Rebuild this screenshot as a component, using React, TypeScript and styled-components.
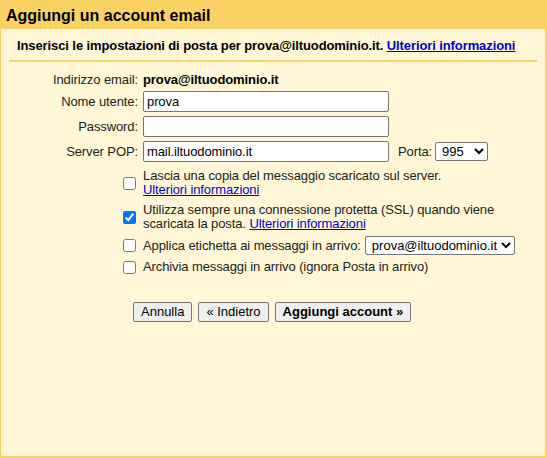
import React from "react";
import styled, { createGlobalStyle } from "styled-components";

const GlobalStyle = createGlobalStyle`
  html, body { margin: 0; padding: 0; }
  body {
    font-family: "Liberation Sans", Arial, sans-serif;
    font-size: 13px;
    letter-spacing: -0.1px;
    color: #222;
    background: #fff;
  }
  * { box-sizing: border-box; }
`;

const GOLD = "#fad163";
const CREAM = "#fff7d7";

const Window = styled.div`
  width: 547px;
  height: 458px;
  display: flex;
  flex-direction: column;
  background: ${CREAM};
  border-left: 1px solid ${GOLD};
  border-right: 2px solid ${GOLD};
  border-bottom: 2px solid ${GOLD};
`;

const Header = styled.div`
  height: 29px;
  margin-left: -1px;
  margin-right: -2px;
  padding: 6px 0 0 6px;
  background: ${GOLD};
  font-size: 16px;
  font-weight: bold;
  line-height: 20px;
  letter-spacing: 0;
  color: #000;
`;

const Intro = styled.div`
  margin: 0 8px;
  padding: 9px 8px 7px;
  border-bottom: 2px solid ${GOLD};
  font-weight: bold;
  line-height: 15px;
  color: #000;
`;

const Link = styled.a`
  color: #0000cc;
  text-decoration: underline;
  cursor: pointer;
`;

const Form = styled.div`
  display: flex;
  flex-direction: column;
  gap: 4px;
  margin-top: 10px;
`;

const Row = styled.div<{ $pad?: number; $top?: number }>`
  display: grid;
  grid-template-columns: 137px 1fr;
  column-gap: 5px;
  align-items: center;
  padding: ${(p) => p.$pad ?? 0}px 0;
  margin-top: ${(p) => p.$top ?? 0}px;
`;

const Label = styled.label`
  text-align: right;
  line-height: 15px;
  white-space: nowrap;
`;

const Value = styled.span`
  font-weight: bold;
  line-height: 15px;
  color: #000;
`;

const TextInput = styled.input`
  width: 246px;
  height: 21px;
  padding: 0 3px;
  border: 1px solid #767676;
  border-radius: 2px;
  background: #fff;
  font-family: "Liberation Sans", Arial, sans-serif;
  font-size: 13px;
  letter-spacing: -0.1px;
  color: #000;
  outline: none;
`;

const Inline = styled.div`
  display: flex;
  align-items: center;
  gap: 3px;
  white-space: nowrap;
  line-height: 14px;
`;

const PortLabel = styled.span`
  margin-left: 6px;
`;

const Select = styled.select<{ $width?: number; $offset?: number }>`
  height: 19px;
  ${(p) => (p.$width ? `width: ${p.$width}px;` : "")}
  margin-left: ${(p) => p.$offset ?? 0}px;
  padding: 0 0 0 2px;
  border: 1px solid #767676;
  border-radius: 2px;
  background: #fff;
  font-family: "Liberation Sans", Arial, sans-serif;
  font-size: 13px;
  letter-spacing: 0;
  color: #000;
`;

const Check = styled.input`
  justify-self: end;
  width: 13px;
  height: 13px;
  margin: 0 2px 0 0;
`;

const CheckText = styled.div`
  line-height: 14px;
  color: #222;
`;

const Buttons = styled.div`
  display: flex;
  gap: 6px;
  margin-top: 27px;
  padding-left: 132px;
`;

const Button = styled.button<{ $primary?: boolean }>`
  height: 20px;
  padding: 0 7px;
  border: 1px solid #767676;
  border-radius: 2px;
  background: #efefef;
  font-family: "Liberation Sans", Arial, sans-serif;
  font-size: 13px;
  letter-spacing: 0;
  font-weight: ${(p) => (p.$primary ? "bold" : "normal")};
  color: #000;
  line-height: 18px;
`;

export default function App() {
  return (
    <>
      <GlobalStyle />
      <Window>
        <Header>Aggiungi un account email</Header>
        <Intro>
          Inserisci le impostazioni di posta per prova@iltuodominio.it.{" "}
          <Link>Ulteriori informazioni</Link>
        </Intro>
        <Form>
          <Row>
            <Label>Indirizzo email:</Label>
            <Value>prova@iltuodominio.it</Value>
          </Row>
          <Row>
            <Label>Nome utente:</Label>
            <TextInput defaultValue="prova" />
          </Row>
          <Row>
            <Label>Password:</Label>
            <TextInput type="password" />
          </Row>
          <Row>
            <Label>Server POP:</Label>
            <Inline>
              <TextInput defaultValue="mail.iltuodominio.it" />
              <PortLabel>Porta:</PortLabel>
              <Select $width={53} defaultValue="995">
                <option value="110">110</option>
                <option value="995">995</option>
              </Select>
            </Inline>
          </Row>
          <Row $pad={1} $top={2}>
            <Check type="checkbox" />
            <CheckText>
              Lascia una copia del messaggio scaricato sul server.
              <br />
              <Link>Ulteriori informazioni</Link>
            </CheckText>
          </Row>
          <Row $pad={1}>
            <Check type="checkbox" defaultChecked />
            <CheckText>
              Utilizza sempre una connessione protetta (SSL) quando viene
              <br />
              scaricata la posta. <Link>Ulteriori informazioni</Link>
            </CheckText>
          </Row>
          <Row>
            <Check type="checkbox" />
            <Inline>
              Applica etichetta ai messaggi in arrivo:
              <Select $offset={1} defaultValue="p">
                <option value="p">prova@iltuodominio.it</option>
              </Select>
            </Inline>
          </Row>
          <Row $pad={1}>
            <Check type="checkbox" />
            <CheckText>Archivia messaggi in arrivo (ignora Posta in arrivo)</CheckText>
          </Row>
        </Form>
        <Buttons>
          <Button>Annulla</Button>
          <Button>« Indietro</Button>
          <Button $primary>Aggiungi account »</Button>
        </Buttons>
      </Window>
    </>
  );
}
